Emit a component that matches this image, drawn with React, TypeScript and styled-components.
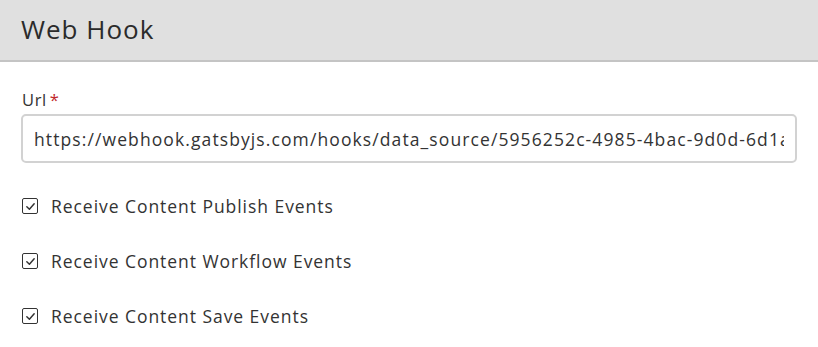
import React from "react";
import styled, { createGlobalStyle } from "styled-components";

const Global = createGlobalStyle`
  html, body { margin: 0; padding: 0; background: #fff; }
  body { font-family: "Open Sans", Lato, sans-serif; color: #333; }
  * { box-sizing: border-box; }
`;

const Page = styled.div`
  width: 818px;
  height: 347px;
  overflow: hidden;
  display: flex;
  flex-direction: column;
`;

const Header = styled.div`
  height: 62px;
  background: #e0e0e0;
  border-bottom: 2px solid #c4c4c4;
  display: flex;
  align-items: center;
  padding: 0 21px;
`;

const Title = styled.h1`
  margin: 0;
  font-size: 26px;
  font-weight: 400;
  letter-spacing: 1px;
  color: #2b2b2b;
  padding-bottom: 2px;
`;

const Body = styled.div`
  padding: 27px 22px 0 21px;
  display: flex;
  flex-direction: column;
`;

const Label = styled.label`
  font-size: 16.5px;
  letter-spacing: 0.6px;
  color: #333;
  margin-left: 1px;
  margin-bottom: 3px;
  line-height: 22px;
`;

const Required = styled.span`
  color: #c0262b;
  margin-left: 3px;
`;

const Input = styled.input`
  width: 776px;
  height: 49px;
  border: 2px solid #d2d2d2;
  border-radius: 5px;
  padding: 0 11px;
  font-family: inherit;
  font-size: 17.5px;
  letter-spacing: 1.1px;
  color: #333;
  outline: none;
  background: #fff;
`;

const Checks = styled.div`
  display: flex;
  flex-direction: column;
  gap: 33px;
  margin-top: 32px;
  margin-left: 1px;
`;

const CheckRow = styled.label`
  display: flex;
  align-items: center;
  gap: 13px;
  font-size: 17.5px;
  letter-spacing: 0.95px;
  line-height: 22px;
  color: #333;
`;

const Box = styled.span`
  width: 16px;
  height: 16px;
  border: 1.5px solid #333;
  border-radius: 2px;
  display: flex;
  align-items: center;
  justify-content: center;
`;

const Check = () => (
  <Box>
    <svg width="11" height="11" viewBox="0 0 12 12" fill="none">
      <path d="M2 6.3 L4.8 9 L10 3" stroke="#333" strokeWidth="1.6" strokeLinecap="round" strokeLinejoin="round" />
    </svg>
  </Box>
);

const items = [
  "Receive Content Publish Events",
  "Receive Content Workflow Events",
  "Receive Content Save Events",
];

export default function App() {
  return (
    <Page>
      <Global />
      <Header>
        <Title>Web Hook</Title>
      </Header>
      <Body>
        <Label>
          Url<Required>*</Required>
        </Label>
        <Input
          readOnly
          value="https://webhook.gatsbyjs.com/hooks/data_source/5956252c-4985-4bac-9d0d-6d1a4c5e8f20"
        />
        <Checks>
          {items.map((t) => (
            <CheckRow key={t}>
              <Check />
              {t}
            </CheckRow>
          ))}
        </Checks>
      </Body>
    </Page>
  );
}
